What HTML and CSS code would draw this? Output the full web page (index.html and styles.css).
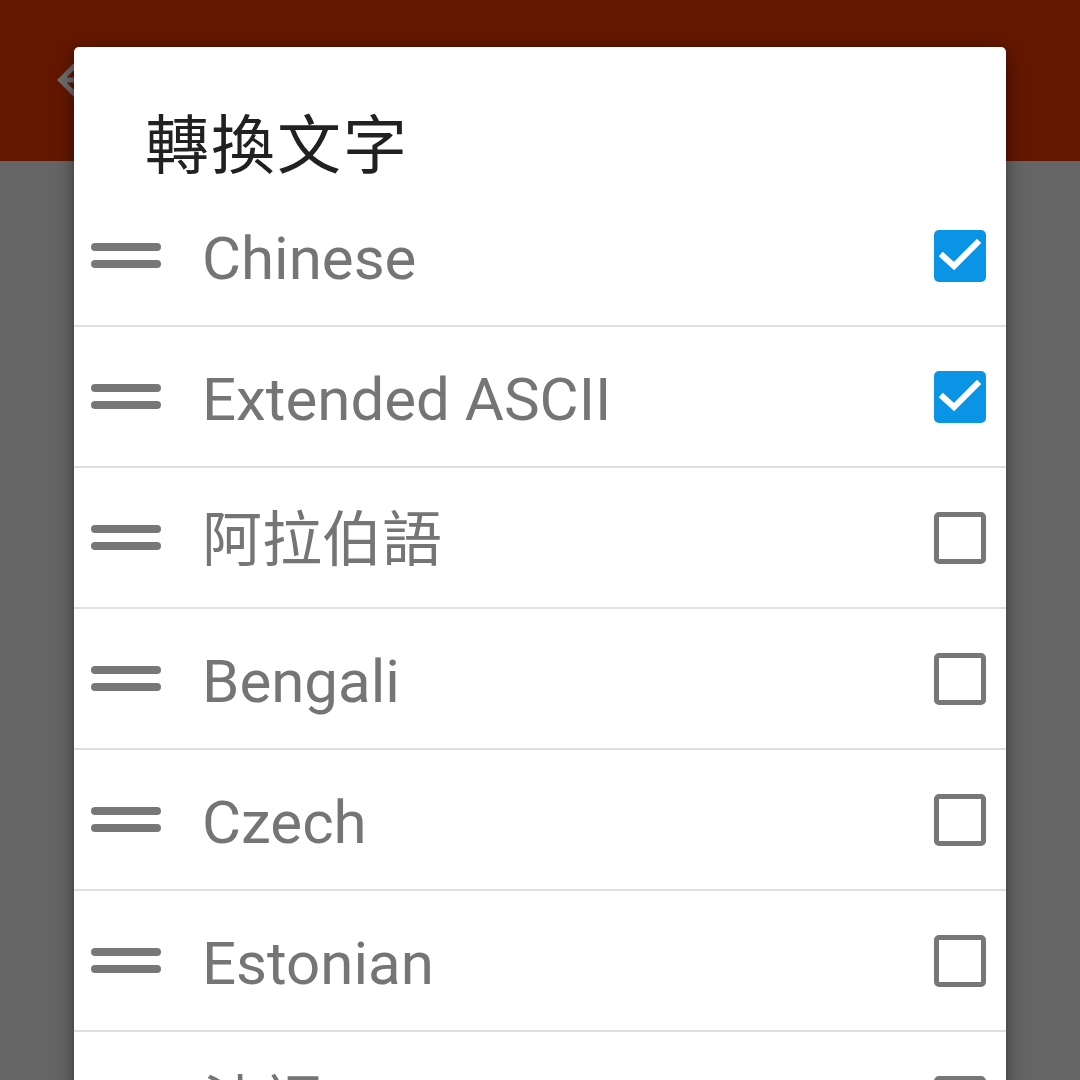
FILE: index.html
```html
<!DOCTYPE html>
<html lang="zh-Hant">
<head>
<meta charset="utf-8">
<link rel="stylesheet" href="styles.css">
</head>
<body>
<div class="screen">
  <header class="appbar">
    <svg class="back" viewBox="0 0 24 24"><path d="M20 11H7.83l5.59-5.59L12 4l-8 8 8 8 1.41-1.41L7.83 13H20v-2z"/></svg>
  </header>
  <div class="dim"></div>
  <div class="dialog">
    <h1 class="title">轉換文字</h1>
    <ul class="list">
      <li class="row"><span class="handle"><i></i><i></i></span><span class="label">Chinese</span><span class="cb on"><svg viewBox="0 0 52 52"><polyline points="9,26 20,36 43,13"/></svg></span></li>
      <li class="row"><span class="handle"><i></i><i></i></span><span class="label">Extended ASCII</span><span class="cb on"><svg viewBox="0 0 52 52"><polyline points="9,26 20,36 43,13"/></svg></span></li>
      <li class="row"><span class="handle"><i></i><i></i></span><span class="label">阿拉伯語</span><span class="cb"></span></li>
      <li class="row"><span class="handle"><i></i><i></i></span><span class="label">Bengali</span><span class="cb"></span></li>
      <li class="row"><span class="handle"><i></i><i></i></span><span class="label">Czech</span><span class="cb"></span></li>
      <li class="row"><span class="handle"><i></i><i></i></span><span class="label">Estonian</span><span class="cb"></span></li>
      <li class="row"><span class="handle"><i></i><i></i></span><span class="label">法語</span><span class="cb"></span></li>
    </ul>
  </div>
</div>
</body>
</html>
```
FILE: styles.css
```css
html, body {
  margin: 0;
  padding: 0;
}
body {
  width: 1080px;
  height: 1080px;
  overflow: hidden;
  background: #666666;
  font-family: Roboto, "Noto Sans CJK TC", sans-serif;
}
.screen {
  position: relative;
  width: 1080px;
  height: 1080px;
  overflow: hidden;
}
.appbar {
  height: 161px;
  background: #641700;
  position: relative;
}
.back {
  position: absolute;
  left: 47px;
  top: 50px;
  width: 60px;
  height: 60px;
  fill: #6e6e6e;
}
.dim {
  height: 919px;
  background: #666666;
}
.dialog {
  position: absolute;
  left: 74px;
  top: 47px;
  width: 932px;
  height: 1200px;
  background: #ffffff;
  border-radius: 5px;
  box-shadow: 0 6px 24px rgba(0,0,0,0.35), 0 2px 8px rgba(0,0,0,0.2);
}
.title {
  margin: 0;
  height: 139px;
  box-sizing: border-box;
  padding: 61px 0 0 71px;
  font-family: "Noto Sans CJK TC", sans-serif;
  font-weight: 400;
  font-size: 64px;
  line-height: 1;
  color: #212121;
  letter-spacing: 2px;
}
.list {
  list-style: none;
  margin: 0;
  padding: 0;
}
.row {
  height: 139px;
  border-bottom: 2px solid #e0e0e0;
  display: flex;
  align-items: center;
  padding: 0 20px 0 17px;
}
.handle {
  width: 70px;
  display: flex;
  flex-direction: column;
  gap: 9px;
  flex: none;
}
.handle i {
  display: block;
  height: 8px;
  border-radius: 4px;
  background: #777777;
}
.label {
  flex: 1;
  margin-left: 41px;
  padding-top: 6px;
  font-size: 60px;
  color: #757575;
  font-family: Roboto, "Noto Sans CJK TC", sans-serif;
  line-height: 1;
}
.cb {
  width: 52px;
  height: 52px;
  box-sizing: border-box;
  border: 5px solid #777777;
  border-radius: 5px;
  flex: none;
}
.cb.on {
  border: none;
  background: #0a94e6;
}
.cb svg {
  display: block;
  width: 52px;
  height: 52px;
}
.cb polyline {
  fill: none;
  stroke: #ffffff;
  stroke-width: 6;
  stroke-linecap: square;
}
```
